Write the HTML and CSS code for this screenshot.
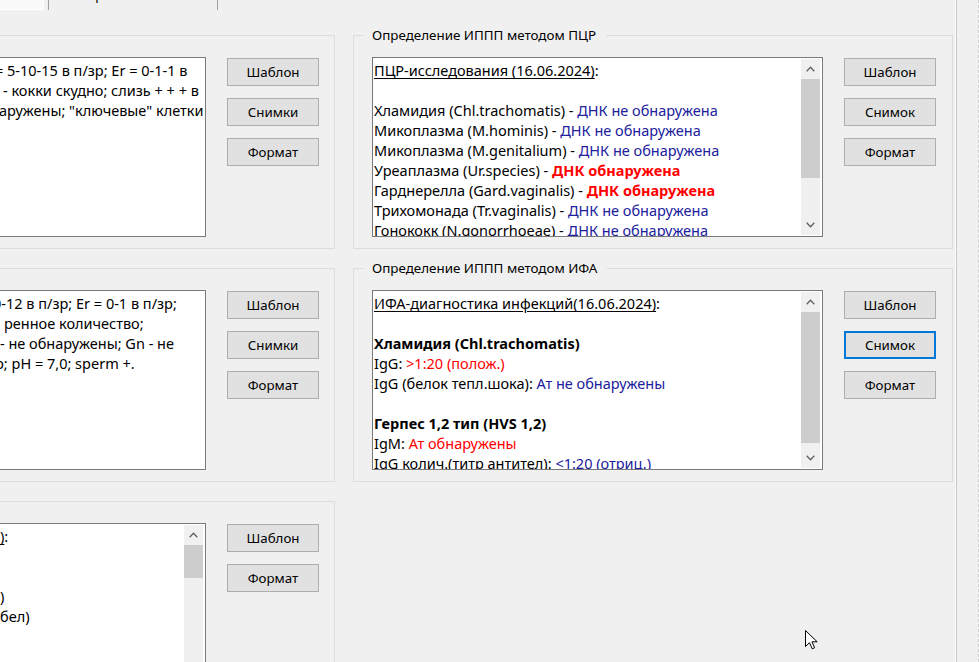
FILE: index.html
```html
<!DOCTYPE html>
<html lang="ru">
<head>
<meta charset="utf-8">
<title>Анализы</title>
<link rel="stylesheet" href="styles.css">
</head>
<body>
<div class="form">
  <div class="tabs">
    <div class="tab tab-first"><span class="tab-label tab-label-first">е</span></div>
    <div class="tab tab-second"><span class="tab-label">Бактериальные посевы</span></div>
  </div>
  <div class="groups">
    <fieldset class="group group-left">
      <legend class="legend legend-off">Микроскопия мазка</legend>
      <div class="group-body">
        <div class="textbox textbox-left">
          <div class="text text-left">
            <div class="off-m5">= 5-10-15 в п/зр; Er = 0-1-1 в</div>
            <div class="off-p3">- кокки скудно; слизь + + + в</div>
            <div class="off-m1">аружены; "ключевые" клетки</div>
          </div>
        </div>
        <div class="buttons">
          <button class="btn">Шаблон</button>
          <button class="btn">Снимки</button>
          <button class="btn">Формат</button>
        </div>
      </div>
    </fieldset>
    <fieldset class="group group-right">
      <legend class="legend">Определение ИППП методом ПЦР</legend>
      <div class="group-body">
        <div class="textbox">
          <div class="text">
            <div><u>ПЦР-исследования (16.06.2024)</u>:</div>
            <div>&nbsp;</div>
            <div>Хламидия (Chl.trachomatis) - <span class="neg">ДНК не обнаружена</span></div>
            <div>Микоплазма (M.hominis) - <span class="neg">ДНК не обнаружена</span></div>
            <div>Микоплазма (M.genitalium) - <span class="neg">ДНК не обнаружена</span></div>
            <div>Уреаплазма (Ur.species) - <span class="pos-bold">ДНК обнаружена</span></div>
            <div>Гарднерелла (Gard.vaginalis) - <span class="pos-bold">ДНК обнаружена</span></div>
            <div>Трихомонада (Tr.vaginalis) - <span class="neg">ДНК не обнаружена</span></div>
            <div>Гонококк (N.gonorrhoeae) - <span class="neg">ДНК не обнаружена</span></div>
            <div>Кандида (C.albicans) - <span class="neg">ДНК не обнаружена</span></div>
          </div>
          <div class="scrollbar">
            <div class="sb-arrow"><svg width="9" height="6" viewBox="0 0 9 6"><polyline points="0.7,5.2 4.5,1.2 8.3,5.2" fill="none" stroke="#606060" stroke-width="1.3"/></svg></div>
            <div class="sb-thumb sb-thumb-pcr"></div>
            <div class="sb-track"></div>
            <div class="sb-arrow"><svg width="9" height="6" viewBox="0 0 9 6"><polyline points="0.7,0.8 4.5,4.8 8.3,0.8" fill="none" stroke="#606060" stroke-width="1.3"/></svg></div>
          </div>
        </div>
        <div class="buttons">
          <button class="btn">Шаблон</button>
          <button class="btn">Снимок</button>
          <button class="btn">Формат</button>
        </div>
      </div>
    </fieldset>

    <fieldset class="group group-left">
      <legend class="legend legend-off">Микроскопия секрета</legend>
      <div class="group-body">
        <div class="textbox textbox-left">
          <div class="text text-left">
            <div class="off-m7">0-12 в п/зр; Er = 0-1 в п/зр;</div>
            <div class="off-p4">ренное количество;</div>
            <div>- не обнаружены; Gn - не</div>
            <div class="off-m5">р; pH = 7,0; sperm +.</div>
          </div>
        </div>
        <div class="buttons">
          <button class="btn">Шаблон</button>
          <button class="btn">Снимки</button>
          <button class="btn">Формат</button>
        </div>
      </div>
    </fieldset>
    <fieldset class="group group-right">
      <legend class="legend">Определение ИППП методом ИФА</legend>
      <div class="group-body">
        <div class="textbox">
          <div class="text">
            <div><u>ИФА-диагностика инфекций(16.06.2024)</u>:</div>
            <div>&nbsp;</div>
            <div><b>Хламидия (Chl.trachomatis)</b></div>
            <div>IgG: <span class="pos">&gt;1:20 (полож.)</span></div>
            <div>IgG (белок тепл.шока): <span class="neg">Ат не обнаружены</span></div>
            <div>&nbsp;</div>
            <div><b>Герпес 1,2 тип (HVS 1,2)</b></div>
            <div>IgM: <span class="pos">Ат обнаружены</span></div>
            <div>IgG колич.(титр антител): <span class="neg">&lt;1:20 (отриц.)</span></div>
            <div>IgG авидность: <span class="neg">не определяется</span></div>
          </div>
          <div class="scrollbar">
            <div class="sb-arrow"><svg width="9" height="6" viewBox="0 0 9 6"><polyline points="0.7,5.2 4.5,1.2 8.3,5.2" fill="none" stroke="#606060" stroke-width="1.3"/></svg></div>
            <div class="sb-thumb sb-thumb-ifa"></div>
            <div class="sb-track"></div>
            <div class="sb-arrow"><svg width="9" height="6" viewBox="0 0 9 6"><polyline points="0.7,0.8 4.5,4.8 8.3,0.8" fill="none" stroke="#606060" stroke-width="1.3"/></svg></div>
          </div>
        </div>
        <div class="buttons">
          <button class="btn">Шаблон</button>
          <button class="btn btn-focus">Снимок</button>
          <button class="btn">Формат</button>
        </div>
      </div>
    </fieldset>

    <fieldset class="group group-left group-last">
      <legend class="legend legend-off">Посев на флору</legend>
      <div class="group-body">
        <div class="textbox textbox-left textbox-tall">
          <div class="text text-left">
            <div><u>)</u>:</div>
            <div>&nbsp;</div>
            <div>&nbsp;</div>
            <div>)</div>
            <div>бел)</div>
            <div>&nbsp;</div>
          </div>
          <div class="scrollbar">
            <div class="sb-arrow"><svg width="9" height="6" viewBox="0 0 9 6"><polyline points="0.7,5.2 4.5,1.2 8.3,5.2" fill="none" stroke="#606060" stroke-width="1.3"/></svg></div>
            <div class="sb-thumb sb-thumb-last"></div>
            <div class="sb-track"></div>
          </div>
        </div>
        <div class="buttons">
          <button class="btn">Шаблон</button>
          <button class="btn">Формат</button>
        </div>
      </div>
    </fieldset>
  </div>
</div>
<div class="side"><div class="side-inner"></div></div>
<svg class="cursor" width="13" height="20" viewBox="0 0 13 20"><path d="M0.5,0.5 L0.5,16.5 L4.5,12.7 L7.2,18.8 L9.6,17.8 L7,11.8 L12.2,11.8 Z" fill="#fff" stroke="#000" stroke-width="1" stroke-linejoin="miter"/></svg>
</body>
</html>
```
FILE: styles.css
```css
* { box-sizing: border-box; }
html, body { margin: 0; padding: 0; }
body {
  width: 979px;
  height: 662px;
  overflow: hidden;
  background: #f0f0f0;
  font-family: "Noto Sans", "Open Sans", "DejaVu Sans", sans-serif;
  color: #000;
  display: flex;
  position: relative;
}
.form {
  width: 955px;
  height: 662px;
  overflow: hidden;
  display: flex;
  flex-direction: column;
  flex: none;
}
.tabs { display: flex; height: 10px; flex: none; overflow: hidden; }
.tab { height: 10px; overflow: hidden; }
.tab-first {
  width: 44px;
  background: #f9f9f9;
  border-right: 1px solid #ffffff;
  border-bottom: 1px solid #ffffff;
}
.tab-second {
  width: 170px;
  margin-left: 4px;
  border-left: 1px solid #a0a0a0;
  border-right: 1px solid #a0a0a0;
}
.tab-label {
  display: block;
  font-size: 13px;
  line-height: 16px;
  margin-top: -13px;
  padding-left: 11px;
  white-space: nowrap;
}
.tab-label-first { padding-left: 0; margin-left: -1px; }

.groups {
  display: grid;
  grid-template-columns: 635px 600px;
  grid-template-rows: 222px 222px 1fr;
  column-gap: 18px;
  row-gap: 11px;
  margin-left: -300px;
  margin-top: 17px;
  flex: 1;
  min-height: 0;
}
.group {
  margin: 0;
  padding: 14px 15px 11px 18px;
  border: 1px solid #dcdcdc;
  min-width: 0;
  min-inline-size: 0;
}
.group-left { padding-left: 290px; }
.group-right { padding-right: 16px; }
.group-last { height: 260px; }
.legend {
  font-size: 13.4px;
  line-height: 16px;
  height: 16px;
  padding: 0 10px 0 9px;
  margin-left: -9px;
  white-space: nowrap;
}
.legend-off { margin-left: -281px; }

.group-body { display: flex; gap: 21px; align-items: flex-start; }
.textbox {
  width: 451px;
  height: 180px;
  border: 1px solid #7a7a7a;
  background: #fff;
  display: flex;
  flex: none;
  overflow: hidden;
}
.textbox-left { width: 215px; }
.textbox-tall { height: 220px; }
.text {
  flex: 1;
  min-width: 0;
  overflow: hidden;
  padding: 2px 0 0 1px;
  font-size: 14.5px;
  line-height: 20px;
  white-space: nowrap;
}
.text-left { padding-left: 8px; }
.off-m7 { margin-left: -7px; }
.off-m5 { margin-left: -5px; }
.off-m1 { margin-left: -1px; }
.off-p3 { margin-left: 3px; }
.off-p4 { margin-left: 4px; }
.neg { color: #20209c; }
.pos { color: #ff0000; }
.pos-bold { color: #ff0000; font-weight: bold; }
u { text-underline-offset: 2px; }

.scrollbar {
  width: 19px;
  margin: 1px 2px 1px 0;
  background: #f0f0f0;
  display: flex;
  flex-direction: column;
  flex: none;
}
.sb-arrow {
  height: 20px;
  flex: none;
  display: flex;
  align-items: center;
  justify-content: center;
}
.sb-thumb { background: #cdcdcd; flex: none; }
.sb-thumb-pcr { height: 99px; }
.sb-thumb-ifa { height: 131px; }
.sb-thumb-last { height: 33px; }
.sb-track { flex: 1; }

.buttons {
  display: flex;
  flex-direction: column;
  gap: 12px;
  padding-top: 1px;
  flex: none;
}
.btn {
  width: 92px;
  height: 28px;
  margin: 0;
  padding: 0;
  background: #e1e1e1;
  border: 1px solid #adadad;
  font-family: "Noto Sans", "Open Sans", "DejaVu Sans", sans-serif;
  font-size: 13.3px;
  color: #000;
}
.btn-focus { border: 2px solid #0078d7; }

.side {
  flex: 1;
  display: flex;
  border-left: 1px solid #fafafa;
}
.side-inner {
  flex: 1;
  border-left: 1px solid #c9c9c9;
  border-right: 1px dashed #d0d0d0;
}
.cursor {
  position: absolute;
  left: 805px;
  top: 630px;
}
```
